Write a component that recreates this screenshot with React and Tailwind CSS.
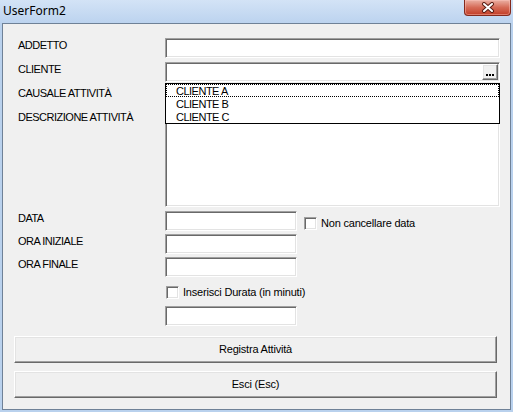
import { useState } from "react";

const sunken =
  "bg-white border border-t-[#a0a0a0] border-l-[#a0a0a0] border-b-white border-r-white shadow-[inset_1px_1px_0_#696969,inset_-1px_-1px_0_#e3e3e3]";
const raised =
  "bg-[#f0f0f0] border border-t-white border-l-white border-b-[#696969] border-r-[#696969] shadow-[inset_-1px_-1px_0_#a0a0a0,inset_1px_1px_0_#e3e3e3]";

function TextBox({ className = "" }) {
  return <div className={`${sunken} ${className}`} />;
}

function CheckBox({ label, checked, onChange }) {
  return (
    <div className="flex items-center h-[13px] cursor-default" onClick={onChange}>
      <div className={`${sunken} w-[13px] h-[13px] shrink-0 flex items-center justify-center`}>
        {checked && (
          <svg width="9" height="9" viewBox="0 0 9 9">
            <path d="M1 4 L3.5 6.5 L8 1.5" fill="none" stroke="#000" strokeWidth="1.6" />
          </svg>
        )}
      </div>
      <span className="ml-[4px] text-[11px] leading-[13px] tracking-[-0.2px] whitespace-nowrap">{label}</span>
    </div>
  );
}

function Row({ label, children, className = "" }) {
  return (
    <div className={`flex items-start ${className}`}>
      <span className="w-[147px] shrink-0 text-[11px] leading-[14px] tracking-[-0.5px] whitespace-nowrap">
        {label}
      </span>
      {children}
    </div>
  );
}

function CloseButton() {
  return (
    <div className="w-[47px] h-[16px] rounded-b-[4px] border border-t-0 border-[#83291c] bg-gradient-to-b from-[#eab0a4] via-[#d56a56] to-[#c23b24] shadow-[inset_0_0_0_1px_rgba(255,200,190,0.45)] flex items-center justify-center">
      <svg width="14" height="11" viewBox="0 0 14 11">
        <path d="M3 2 L11 9 M11 2 L3 9" stroke="#5a1d14" strokeWidth="4" strokeLinecap="round" />
        <path d="M3 2 L11 9 M11 2 L3 9" stroke="#ffffff" strokeWidth="2" strokeLinecap="round" />
      </svg>
    </div>
  );
}

const clienti = ["CLIENTE A", "CLIENTE B", "CLIENTE C"];

export default function App() {
  const [keepDate, setKeepDate] = useState(false);
  const [durata, setDurata] = useState(false);
  const [sel, setSel] = useState(0);

  return (
    <div className="w-[513px] h-[412px] flex flex-col bg-[#b9d1ed] font-['Liberation_Sans',Arial,sans-serif] text-black select-none">
      {/* title bar */}
      <div className="h-[23px] shrink-0 flex items-start justify-between pl-[3px] pr-[2px] bg-gradient-to-b from-[#d3e3f6] to-[#bcd3ef]">
        <span className="font-['Noto_Sans',sans-serif] text-[12px] leading-[21px]">UserForm2</span>
        <CloseButton />
      </div>

      <div className="flex-1 flex px-[2px] pb-[2px]">
        <div className="flex-1 flex flex-col border border-[#6f8197] bg-[#f0f0f0]">
          <div className="flex flex-col pl-[15px] pt-[14px]">
            <Row label="ADDETTO">
              <TextBox className="w-[335px] h-[20px]" />
            </Row>

            <Row label="CLIENTE" className="mt-[4px]">
              <div className="relative w-[335px] h-[20px]">
                <div className={`${sunken} w-full h-full flex justify-end p-[1px]`}>
                  {/* "..." drop button */}
                  <div className={`${raised} w-[16px] h-[16px] flex items-end justify-center gap-[1px] pb-[3px]`}>
                    <span className="w-[2px] h-[2px] bg-black" />
                    <span className="w-[2px] h-[2px] bg-black" />
                    <span className="w-[2px] h-[2px] bg-black" />
                  </div>
                </div>
                {/* open list of the combo */}
                <div className="absolute left-0 top-[21px] z-10 w-[335px] bg-white border border-black flex flex-col">
                  {clienti.map((c, i) => (
                    <div
                      key={c}
                      onClick={() => setSel(i)}
                      className={`h-[13px] pl-[9px] text-[11px] leading-[12px] tracking-[-0.5px] border ${
                        i === sel ? "border-dotted border-black" : "border-transparent"
                      }`}
                    >
                      {c}
                    </div>
                  ))}
                </div>
              </div>
            </Row>

            <Row label="CAUSALE ATTIVITÀ" className="mt-[4px]">
              <TextBox className="w-[335px] h-[20px]" />
            </Row>

            <Row label="DESCRIZIONE ATTIVITÀ" className="mt-[4px]">
              <TextBox className="w-[335px] h-[97px]" />
            </Row>

            <Row label="DATA" className="mt-[4px]">
              <TextBox className="w-[132px] h-[20px]" />
              <div className="ml-[7px] mt-[6px]">
                <CheckBox label="Non cancellare data" checked={keepDate} onChange={() => setKeepDate(!keepDate)} />
              </div>
            </Row>

            <Row label="ORA INIZIALE" className="mt-[3px]">
              <TextBox className="w-[132px] h-[20px]" />
            </Row>

            <Row label="ORA FINALE" className="mt-[3px]">
              <TextBox className="w-[132px] h-[20px]" />
            </Row>

            <div className="flex flex-col pl-[148px] mt-[9px]">
              <CheckBox label="Inserisci Durata (in minuti)" checked={durata} onChange={() => setDurata(!durata)} />
            </div>

            <div className="flex pl-[147px] mt-[7px]">
              <TextBox className="w-[132px] h-[20px]" />
            </div>
          </div>

          <div className="flex flex-col gap-[8px] pl-[11px] mt-[10px]">
            <button className={`${raised} w-[483px] h-[27px] text-[11px] tracking-[-0.2px]`}>Registra Attività</button>
            <button className={`${raised} w-[483px] h-[27px] text-[11px] tracking-[-0.2px]`}>Esci (Esc)</button>
          </div>
        </div>
      </div>
    </div>
  );
}
